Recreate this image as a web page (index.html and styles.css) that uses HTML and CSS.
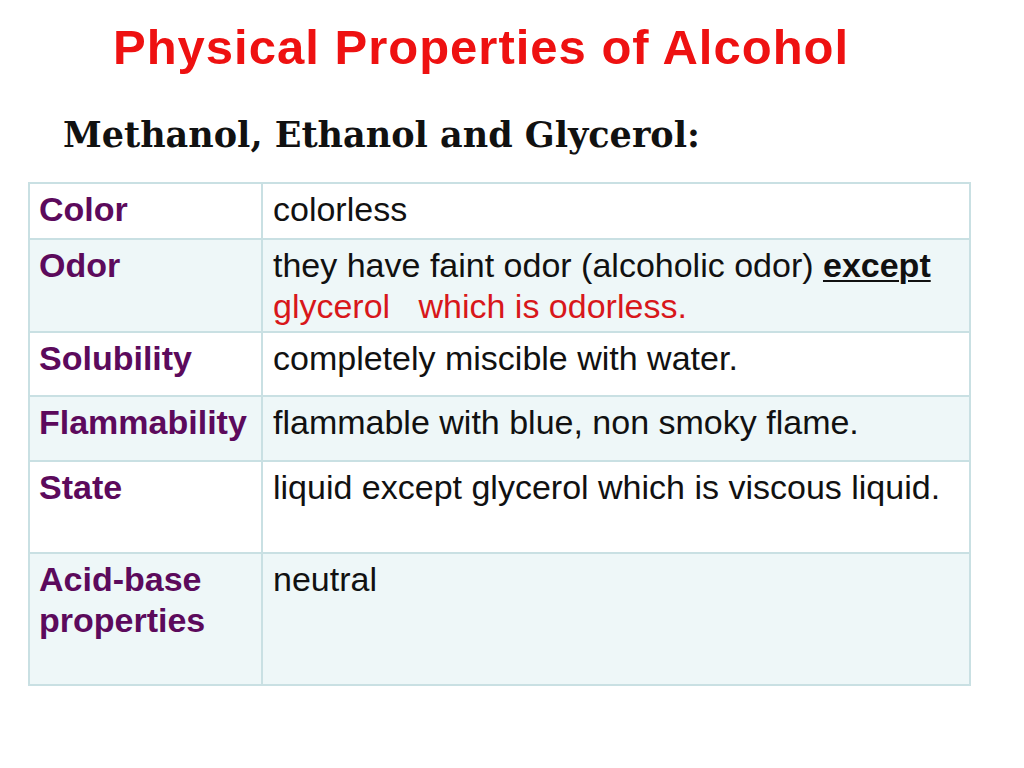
FILE: index.html
```html
<!DOCTYPE html>
<html>
<head>
<meta charset="utf-8">
<link rel="stylesheet" href="styles.css">
</head>
<body>
<div class="slide">
  <h1 class="title">Physical Properties of Alcohol</h1>
  <h2 class="subtitle">Methanol, Ethanol and Glycerol:</h2>
  <div class="table">
    <div class="row r1"><div class="label">Color</div><div class="value">colorless</div></div>
    <div class="row r2 alt"><div class="label">Odor</div><div class="value">they have faint odor (alcoholic odor) <b class="ul">except</b><br><span class="red">glycerol &nbsp; which is odorless.</span></div></div>
    <div class="row r3"><div class="label">Solubility</div><div class="value">completely miscible with water.</div></div>
    <div class="row r4 alt"><div class="label">Flammability</div><div class="value">flammable with blue, non smoky flame.</div></div>
    <div class="row r5"><div class="label">State</div><div class="value">liquid except glycerol which is viscous liquid.</div></div>
    <div class="row r6 alt"><div class="label">Acid-base properties</div><div class="value">neutral</div></div>
  </div>
</div>
</body>
</html>
```

FILE: styles.css
```css
html, body {
  margin: 0;
  padding: 0;
  background: #ffffff;
}
.slide {
  width: 1024px;
  height: 768px;
  box-sizing: border-box;
  padding-top: 19px;
}
.title {
  margin: 0 0 0 113px;
  font-family: "Liberation Sans", Arial, sans-serif;
  font-weight: bold;
  font-size: 49px;
  letter-spacing: 1px;
  line-height: 56px;
  color: #ee1111;
  white-space: nowrap;
}
.subtitle {
  margin: 38px 0 0 63px;
  font-family: "DejaVu Serif", serif;
  font-weight: bold;
  font-size: 35px;
  line-height: 44px;
  color: #111111;
  white-space: nowrap;
}
.table {
  margin: 25px 0 0 28px;
  width: 943px;
  border: 2px solid #c9e0e3;
  box-sizing: border-box;
  display: grid;
  grid-template-rows: 54px 93px 64px 65px 92px 132px;
}
.row {
  display: grid;
  grid-template-columns: 233px 1fr;
  border-top: 2px solid #c9e0e3;
  box-sizing: border-box;
  background: #ffffff;
}
.row.r1 { border-top: none; }
.row.alt { background: #eef7f8; }
.label, .value {
  font-family: "Liberation Sans", Arial, sans-serif;
  font-size: 34px;
  line-height: 41px;
  padding: 5px 9px 0 9px;
}
.value {
  padding-left: 10px;
  color: #111111;
}
.label {
  font-weight: bold;
  color: #5c0a5c;
  border-right: 2px solid #c9e0e3;
}
.ul {
  text-decoration: underline;
  text-decoration-thickness: 2px;
  text-underline-offset: 3px;
}
.red {
  color: #d8171b;
}
```
